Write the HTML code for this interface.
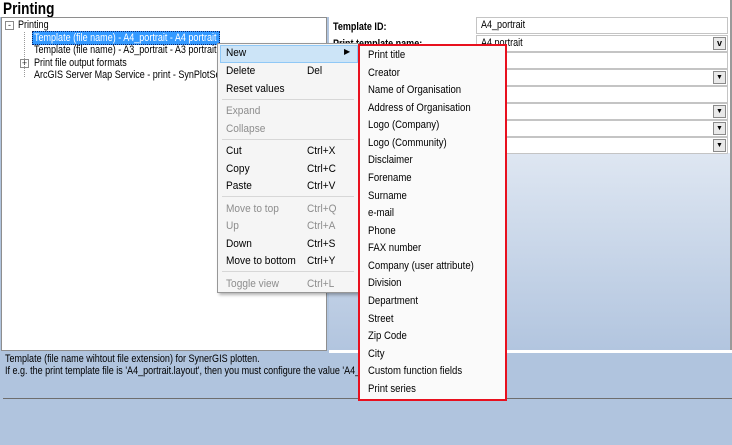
<!DOCTYPE html>
<html><head><style>
*{margin:0;padding:0;box-sizing:border-box}
body{width:732px;height:445px;position:relative;overflow:hidden;background:#b0c4de;font-family:"Liberation Sans",sans-serif;font-size:11px;color:#000}
.a{position:absolute;white-space:nowrap}
.n{transform:scaleX(.82);transform-origin:0 0}
.m{transform:scaleX(.88);transform-origin:0 0}
.menu div.i{position:absolute;left:8px;font-size:11px;transform:scaleX(.92);transform-origin:0 0}
.sc{position:absolute;left:89px;transform:scaleX(.92);transform-origin:0 0}
.dis{color:#8d8d8d}
.sep{position:absolute;left:4px;right:4px;height:1px;background:#d7d7d7}
.sub div{position:absolute;left:8px;font-size:11px;transform:scaleX(.87);transform-origin:0 0;white-space:nowrap}
.f{position:absolute;left:476px;width:252px;height:17px;background:#fff;border:1px solid #c4c4c4}
.dd{position:absolute;right:1px;top:1px;width:13px;height:13px;background:#e9e9e9;border:1px solid #8a8a8a;font-size:7px;text-align:center;line-height:11px}
</style></head><body>
<div class="a" style="left:0;top:0;width:732px;height:17px;background:#fff"></div>
<div class="a" style="left:3px;top:-1px;font-size:17px;font-weight:bold;transform:scaleX(.8);transform-origin:0 0">Printing</div>
<div class="a" style="left:730px;top:0;width:2px;height:350px;background:#9a9a9a"></div>
<!-- tree -->
<div class="a" style="left:1px;top:17px;width:326px;height:334px;background:#fff;border:1px solid #8e8e8e"></div>
<div class="a" style="left:5px;top:21px;width:9px;height:9px;border:1px solid #8a8a8a;font-size:9px;line-height:6px;text-align:center;color:#333">-</div>
<div class="a n" style="left:18px;top:19px">Printing</div>
<div class="a" style="left:24px;top:32px;width:1px;height:45px;border-left:1px dotted #999"></div>
<div class="a" style="left:32px;top:31px;width:188px;height:14px;background:#3399ff;border:1px dotted #0a246a"></div>
<div class="a n" style="left:34px;top:32px;color:#fff">Template (file name) - A4_portrait - A4 portrait</div>
<div class="a n" style="left:34px;top:44px">Template (file name) - A3_portrait - A3 portrait</div>
<div class="a" style="left:20px;top:59px;width:9px;height:9px;border:1px solid #8a8a8a;font-size:9px;line-height:7px;text-align:center;color:#333">+</div>
<div class="a n" style="left:34px;top:57px">Print file output formats</div>
<div class="a n" style="left:34px;top:69px">ArcGIS Server Map Service - print - SynPlotSe</div>
<!-- right panel -->
<div class="a" style="left:329px;top:17px;width:401px;height:333px;background:linear-gradient(#e2e9f3 0%,#dfe7f2 40%,#b2c5df 100%)"></div>
<div class="a" style="left:329px;top:17px;width:401px;height:136px;background:#fff"></div>
<div class="a n" style="left:333px;top:21px;font-weight:bold">Template ID:</div>
<div class="a n" style="left:333px;top:38px;font-weight:bold">Print template name:</div>
<div class="f" style="top:17px"><span class="a n" style="left:4px;top:1px">A4_portrait</span></div>
<div class="f" style="top:35px"><span class="a n" style="left:4px;top:1px">A4 portrait</span><div class="dd" style="font-weight:bold;font-size:9px">v</div></div>
<div class="f" style="top:52px"></div>
<div class="f" style="top:69px"><div class="dd">▼</div></div>
<div class="f" style="top:86px"></div>
<div class="f" style="top:103px"><div class="dd">▼</div></div>
<div class="f" style="top:120px"><div class="dd">▼</div></div>
<div class="f" style="top:137px"><div class="dd">▼</div></div>
<div class="a" style="left:329px;top:350px;width:403px;height:3px;background:#fff"></div>
<!-- description -->
<div class="a n" style="left:5px;top:353px">Template (file name wihtout file extension) for SynerGIS plotten.</div>
<div class="a n" style="left:5px;top:365px">If e.g. the print template file is 'A4_portrait.layout', then you must configure the value 'A4_portrait'.</div>
<div class="a" style="left:3px;top:398px;width:729px;height:1px;background:#6e6e6e"></div>
<!-- context menu -->
<div class="a menu" style="left:217px;top:43px;width:142px;height:250px;background:#f5f5f5;border:1px solid #979797;box-shadow:2px 2px 3px rgba(0,0,0,.3)">
<div class="a" style="left:2px;top:1px;width:138px;height:18px;background:#cce4f7;border:1px solid #90c8f6"></div>
<div class="i" style="top:3px">New</div><div class="a" style="left:126px;top:3px;font-size:8px">▶</div>
<div class="i" style="top:21px">Delete</div><div class="sc" style="top:21px">Del</div>
<div class="i" style="top:39px">Reset values</div>
<div class="sep" style="top:55px"></div>
<div class="i dis" style="top:61px">Expand</div>
<div class="i dis" style="top:79px">Collapse</div>
<div class="sep" style="top:95px"></div>
<div class="i" style="top:101px">Cut</div><div class="sc" style="top:101px">Ctrl+X</div>
<div class="i" style="top:119px">Copy</div><div class="sc" style="top:119px">Ctrl+C</div>
<div class="i" style="top:136px">Paste</div><div class="sc" style="top:136px">Ctrl+V</div>
<div class="sep" style="top:152px"></div>
<div class="i dis" style="top:159px">Move to top</div><div class="sc dis" style="top:159px">Ctrl+Q</div>
<div class="i dis" style="top:176px">Up</div><div class="sc dis" style="top:176px">Ctrl+A</div>
<div class="i" style="top:194px">Down</div><div class="sc" style="top:194px">Ctrl+S</div>
<div class="i" style="top:211px">Move to bottom</div><div class="sc" style="top:211px">Ctrl+Y</div>
<div class="sep" style="top:227px"></div>
<div class="i dis" style="top:234px">Toggle view</div><div class="sc dis" style="top:234px">Ctrl+L</div>
</div>
<!-- submenu -->
<div class="a sub" style="left:358px;top:44px;width:149px;height:357px;background:#fafafa;border:2px solid #e8101e">
<div style="top:3px">Print title</div>
<div style="top:21px">Creator</div>
<div style="top:38px">Name of Organisation</div>
<div style="top:56px">Address of Organisation</div>
<div style="top:73px">Logo (Company)</div>
<div style="top:91px">Logo (Community)</div>
<div style="top:108px">Disclaimer</div>
<div style="top:126px">Forename</div>
<div style="top:144px">Surname</div>
<div style="top:161px">e-mail</div>
<div style="top:179px">Phone</div>
<div style="top:196px">FAX number</div>
<div style="top:214px">Company (user attribute)</div>
<div style="top:231px">Division</div>
<div style="top:249px">Department</div>
<div style="top:267px">Street</div>
<div style="top:284px">Zip Code</div>
<div style="top:302px">City</div>
<div style="top:319px">Custom function fields</div>
<div style="top:337px">Print series</div>
</div>
</body></html>
